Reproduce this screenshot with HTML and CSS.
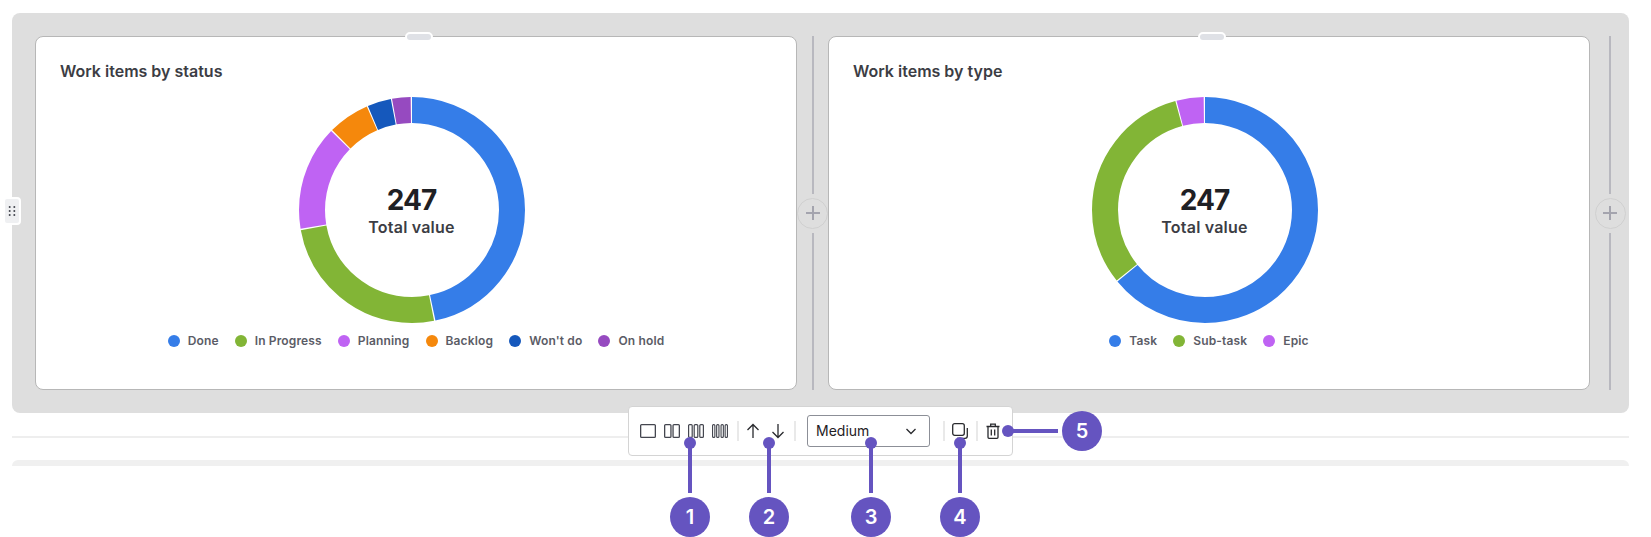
FILE: index.html
```html
<!DOCTYPE html>
<html lang="en">
<head>
<meta charset="utf-8">
<title>Work items layout</title>
<link rel="stylesheet" href="styles.css">
</head>
<body>
<main class="page">
  <section class="layout">
    <span class="side-handle" aria-hidden="true">
      <svg width="8" height="12" viewBox="0 0 8 12"><g fill="#44464f"><circle cx="1.7" cy="2" r="1"/><circle cx="6.3" cy="2" r="1"/><circle cx="1.7" cy="6" r="1"/><circle cx="6.3" cy="6" r="1"/><circle cx="1.7" cy="10" r="1"/><circle cx="6.3" cy="10" r="1"/></g></svg>
    </span>

    <div class="column">
      <article class="card">
        <span class="top-handle"></span>
        <h2 class="card-title">Work items by status</h2>
        <div class="donut">
          <svg class="donut-svg" width="226" height="226" viewBox="0 0 226 226">
            <g transform="rotate(-90 113 113)" fill="none" stroke-width="26">
              <circle cx="113" cy="113" r="100" pathLength="360" stroke="#357de8" stroke-dasharray="168 192" stroke-dashoffset="0"/>
              <circle cx="113" cy="113" r="100" pathLength="360" stroke="#82b536" stroke-dasharray="91 269" stroke-dashoffset="-168.7"/>
              <circle cx="113" cy="113" r="100" pathLength="360" stroke="#bf63f3" stroke-dasharray="53.9 306.1" stroke-dashoffset="-260.4"/>
              <circle cx="113" cy="113" r="100" pathLength="360" stroke="#f5880c" stroke-dasharray="21.4 338.6" stroke-dashoffset="-315"/>
              <circle cx="113" cy="113" r="100" pathLength="360" stroke="#1558bc" stroke-dasharray="12.2 347.8" stroke-dashoffset="-337"/>
              <circle cx="113" cy="113" r="100" pathLength="360" stroke="#964ac0" stroke-dasharray="9.5 350.5" stroke-dashoffset="-349.8"/>
            </g>
          </svg>
          <div class="donut-center">
            <span class="donut-value">247</span>
            <span class="donut-label">Total value</span>
          </div>
        </div>
        <ul class="legend">
          <li class="legend-item"><i class="dot dot-blue"></i>Done</li>
          <li class="legend-item"><i class="dot dot-green"></i>In Progress</li>
          <li class="legend-item"><i class="dot dot-purple"></i>Planning</li>
          <li class="legend-item"><i class="dot dot-orange"></i>Backlog</li>
          <li class="legend-item"><i class="dot dot-navy"></i>Won't do</li>
          <li class="legend-item"><i class="dot dot-violet"></i>On hold</li>
        </ul>
      </article>
      <div class="adder">
        <span class="adder-line"></span>
        <span class="adder-btn"><svg width="16" height="16" viewBox="0 0 16 16"><path d="M8 1v14M1 8h14" stroke="#a4a4ae" stroke-width="2" fill="none"/></svg></span>
        <span class="adder-line"></span>
      </div>
    </div>

    <div class="column column-last">
      <article class="card">
        <span class="top-handle"></span>
        <h2 class="card-title">Work items by type</h2>
        <div class="donut">
          <svg class="donut-svg" width="226" height="226" viewBox="0 0 226 226">
            <g transform="rotate(-90 113 113)" fill="none" stroke-width="26">
              <circle cx="113" cy="113" r="100" pathLength="360" stroke="#357de8" stroke-dasharray="230.8 129.2" stroke-dashoffset="0"/>
              <circle cx="113" cy="113" r="100" pathLength="360" stroke="#82b536" stroke-dasharray="113.3 246.7" stroke-dashoffset="-231.4"/>
              <circle cx="113" cy="113" r="100" pathLength="360" stroke="#bf63f3" stroke-dasharray="14 346" stroke-dashoffset="-345.3"/>
            </g>
          </svg>
          <div class="donut-center">
            <span class="donut-value">247</span>
            <span class="donut-label">Total value</span>
          </div>
        </div>
        <ul class="legend">
          <li class="legend-item"><i class="dot dot-blue"></i>Task</li>
          <li class="legend-item"><i class="dot dot-green"></i>Sub-task</li>
          <li class="legend-item"><i class="dot dot-purple"></i>Epic</li>
        </ul>
      </article>
      <div class="adder">
        <span class="adder-line"></span>
        <span class="adder-btn"><svg width="16" height="16" viewBox="0 0 16 16"><path d="M8 1v14M1 8h14" stroke="#a4a4ae" stroke-width="2" fill="none"/></svg></span>
        <span class="adder-line"></span>
      </div>
    </div>
  </section>

  <hr class="rule">
  <div class="next-section"></div>
</main>

<div class="toolbar">
  <div class="tool-group">
    <svg width="16" height="16" viewBox="0 0 16 16" fill="none" stroke="#44464f" stroke-width="1.3"><rect x=".65" y="1.6" width="14.7" height="12.8" rx="1"/></svg>
    <svg width="16" height="16" viewBox="0 0 16 16" fill="none" stroke="#44464f" stroke-width="1.3"><rect x=".65" y="1.6" width="6.3" height="12.8" rx="1"/><rect x="9.05" y="1.6" width="6.3" height="12.8" rx="1"/></svg>
    <svg width="16" height="16" viewBox="0 0 16 16" fill="none" stroke="#44464f" stroke-width="1.2"><rect x=".6" y="1.6" width="3.6" height="12.8" rx="1"/><rect x="6.2" y="1.6" width="3.6" height="12.8" rx="1"/><rect x="11.8" y="1.6" width="3.6" height="12.8" rx="1"/></svg>
    <svg width="16" height="16" viewBox="0 0 16 16" fill="none" stroke="#44464f" stroke-width="1.1"><rect x=".55" y="1.6" width="2.3" height="12.8" rx="1"/><rect x="4.65" y="1.6" width="2.3" height="12.8" rx="1"/><rect x="9.05" y="1.6" width="2.3" height="12.8" rx="1"/><rect x="13.15" y="1.6" width="2.3" height="12.8" rx="1"/></svg>
  </div>
  <span class="tool-sep sep-a"></span>
  <div class="tool-group tool-group-arrows">
    <svg width="16" height="16" viewBox="0 0 16 16" fill="none" stroke="#292a2e" stroke-width="1.3"><path d="M8 15V1.5M2.5 7 8 1.5 13.5 7"/></svg>
    <svg width="16" height="16" viewBox="0 0 16 16" fill="none" stroke="#292a2e" stroke-width="1.3"><path d="M8 1v13.5M2.5 9 8 14.5 13.5 9"/></svg>
  </div>
  <span class="tool-sep sep-b"></span>
  <div class="select">
    <span class="select-text">Medium</span>
    <svg width="12" height="12" viewBox="0 0 12 12" fill="none" stroke="#292a2e" stroke-width="1.3"><path d="M1.5 4 6 8.5 10.5 4"/></svg>
  </div>
  <span class="tool-sep sep-c"></span>
  <svg class="tool-icon" width="16" height="16" viewBox="0 0 16 16" fill="none" stroke="#292a2e" stroke-width="1.3"><rect x=".7" y=".7" width="11.6" height="11.6" rx="2"/><path d="M15.3 5v8a2.3 2.3 0 0 1-2.3 2.3H5"/></svg>
  <span class="tool-sep sep-d"></span>
  <svg class="tool-icon" width="16" height="16" viewBox="0 0 16 16" fill="none" stroke="#292a2e" stroke-width="1.3"><path d="M1.5 3.5h13M5.7 3.5V1.2h4.6v2.3M3 3.5v10.8a1 1 0 0 0 1 1h8a1 1 0 0 0 1-1V3.5M6.3 6.5v6M9.7 6.5v6"/></svg>
</div>

<div class="marker marker-1"><span class="marker-dot"></span><span class="marker-stem"></span><span class="marker-badge">1</span></div>
<div class="marker marker-2"><span class="marker-dot"></span><span class="marker-stem"></span><span class="marker-badge">2</span></div>
<div class="marker marker-3"><span class="marker-dot"></span><span class="marker-stem"></span><span class="marker-badge">3</span></div>
<div class="marker marker-4"><span class="marker-dot"></span><span class="marker-stem"></span><span class="marker-badge">4</span></div>
<div class="marker marker-h"><span class="marker-dot"></span><span class="marker-stem"></span><span class="marker-badge">5</span></div>
</body>
</html>
```

FILE: styles.css
```css
* { box-sizing: border-box; }

html, body {
  margin: 0;
  height: 537px;
  overflow: hidden;
  background: #fff;
}

body {
  position: relative;
  font-family: Inter, "Liberation Sans", sans-serif;
  color: #292a2e;
}

.page {
  padding: 13px 22px 0 12px;
}

.layout {
  position: relative;
  display: flex;
  height: 400px;
  padding: 23px 0 23px 23px;
  background: #dedede;
  border-radius: 8px;
}

.column {
  display: flex;
  flex: 0 0 792px;
}

.column-last {
  flex: 0 0 802px;
}

.card {
  position: relative;
  flex: 0 0 762px;
  display: flex;
  flex-direction: column;
  align-items: center;
  background: #fff;
  border: 1px solid #b7b7b7;
  border-radius: 8px;
}

.top-handle {
  position: absolute;
  top: -5px;
  left: 50%;
  width: 28px;
  height: 10px;
  margin-left: -11px;
  background: #dfe1e6;
  border: 2px solid #fff;
  border-radius: 5px;
}

.card-title {
  align-self: flex-start;
  margin: 24px 0 0 24px;
  font-size: 16px;
  line-height: 20px;
  font-weight: 600;
  color: #3c3d44;
}

.donut {
  position: relative;
  width: 226px;
  height: 226px;
  margin: 16px 9px 0 0;
}

.donut-svg {
  display: block;
}

.donut-center {
  position: absolute;
  inset: 0;
  display: flex;
  flex-direction: column;
  align-items: center;
  justify-content: center;
}

.donut-value {
  font-size: 28px;
  line-height: 34px;
  font-weight: 700;
  letter-spacing: -1px;
  color: #1f2024;
}

.donut-label {
  font-size: 16px;
  line-height: 20px;
  font-weight: 600;
  letter-spacing: .2px;
  color: #3c3d44;
}

.legend {
  display: flex;
  gap: 16px;
  margin: 10px 0 0;
  padding: 0;
  list-style: none;
}

.legend-item {
  display: flex;
  align-items: center;
  gap: 8px;
  font-size: 12px;
  line-height: 16px;
  font-weight: 600;
  letter-spacing: .15px;
  color: #5b5c66;
}

.dot {
  width: 12px;
  height: 12px;
  border-radius: 50%;
}

.dot-blue { background: #357de8; }
.dot-green { background: #82b536; }
.dot-purple { background: #bf63f3; }
.dot-orange { background: #f5880c; }
.dot-navy { background: #1558bc; }
.dot-violet { background: #964ac0; }

.adder {
  flex: 0 0 30px;
  display: flex;
  flex-direction: column;
  align-items: center;
  gap: 4px;
}

.column-last .adder {
  flex-basis: 40px;
}

.adder-line {
  flex: 1;
  width: 2px;
  background: #b8b8bf;
}

.adder-btn {
  display: flex;
  align-items: center;
  justify-content: center;
  width: 31px;
  height: 31px;
  border: 1.5px solid #d0d0d0;
  border-radius: 50%;
  background: #dedede;
}

.side-handle {
  position: absolute;
  left: -9px;
  top: 184px;
  display: flex;
  align-items: center;
  justify-content: center;
  width: 18px;
  height: 28px;
  background: #eff0f2;
  border: 2px solid #fff;
  border-radius: 4px;
}

.rule {
  height: 2px;
  margin: 23px 0 0;
  border: 0;
  background: #eeeeee;
}

.next-section {
  height: 6px;
  margin-top: 22px;
  background: #f0f0f0;
  border-radius: 8px 8px 0 0;
}

.toolbar {
  position: absolute;
  left: 628px;
  top: 406px;
  width: 385px;
  height: 50px;
  display: flex;
  align-items: center;
  padding-left: 11px;
  background: #fff;
  border: 1px solid #d4d4d4;
  border-radius: 4px;
}

.tool-group {
  display: flex;
  gap: 8px;
}

.tool-group-arrows {
  gap: 9px;
}

.tool-icon {
  flex: none;
}

.tool-sep {
  flex: none;
  width: 2px;
  height: 20px;
  background: #e9e9e9;
}

.sep-a { margin: 0 6px 0 9px; }
.sep-b { margin: 0 11px 0 8px; }
.sep-c { margin: 0 7px 0 13px; }
.sep-d { margin: 0 7px 0 8px; }

.select {
  flex: none;
  width: 123px;
  height: 32px;
  display: flex;
  align-items: center;
  justify-content: space-between;
  padding: 0 12px 0 8px;
  font-size: 14px;
  color: #1f2024;
  border: 1px solid #8c8f97;
  border-bottom-width: 1.5px;
  border-radius: 3px;
}

.select-text {
  margin-top: -2px;
}

.marker {
  position: absolute;
  display: flex;
  flex-direction: column;
  align-items: center;
  width: 40px;
  top: 437px;
}

.marker-1 { left: 670px; }
.marker-2 { left: 749px; }
.marker-3 { left: 851px; }
.marker-4 { left: 940px; }

.marker-dot {
  flex: none;
  width: 12px;
  height: 12px;
  border-radius: 50%;
  background: #6554c0;
}

.marker-stem {
  flex: none;
  width: 4px;
  height: 46px;
  margin-top: -2px;
  background: #6554c0;
}

.marker-badge {
  flex: none;
  display: flex;
  align-items: center;
  justify-content: center;
  width: 40px;
  height: 40px;
  margin-top: 4px;
  border-radius: 50%;
  background: #6554c0;
  color: #fff;
  font-size: 20px;
  font-weight: 600;
}

.marker-h {
  flex-direction: row;
  width: auto;
  left: 1002px;
  top: 411px;
  height: 40px;
}

.marker-h .marker-stem {
  width: 46px;
  height: 4px;
  margin: 0 0 0 -2px;
}

.marker-h .marker-badge {
  margin: 0 0 0 4px;
}
```
